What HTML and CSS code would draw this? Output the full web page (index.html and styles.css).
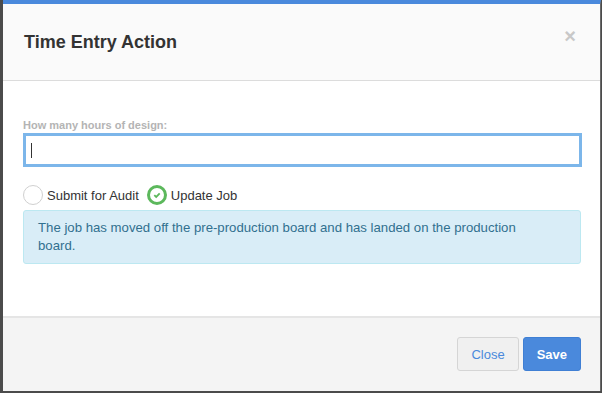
FILE: index.html
```html
<!DOCTYPE html>
<html lang="en">
<head>
  <meta charset="UTF-8">
  <title>Time Entry Action</title>
  <link rel="stylesheet" href="styles.css">
</head>
<body>

  <div class="modal">
    <div class="modal-header">
      <h4 class="modal-title">Time Entry Action</h4>
      <span class="close">&times;</span>
    </div>

    <div class="modal-body">
      <label class="field-label" for="hours">How many hours of design:</label>
      <div class="input-wrap">
        <input type="text" id="hours" class="field-input">
        <span class="caret"></span>
      </div>

      <div class="radio-row">
        <span class="radio"></span>
        <span class="radio-text">Submit for Audit</span>
        <span class="radio checked">
          <svg width="10" height="10" viewBox="0 0 10 10"><path d="M2.3 5.1 L4.2 6.9 L7.7 3.3" fill="none" stroke="#5cb85c" stroke-width="1.8"/></svg>
        </span>
        <span class="radio-text">Update Job</span>
      </div>

      <div class="alert">
        The job has moved off the pre-production board and has landed on the production board.
      </div>
    </div>

    <div class="modal-footer">
      <button class="btn btn-default">Close</button>
      <button class="btn btn-primary">Save</button>
    </div>
  </div>

</body>
</html>
```

FILE: styles.css
```css
html, body {
  margin: 0;
  height: 100%;
}

body {
  background: #4b4b4b;
  font-family: "Liberation Sans", Arial, sans-serif;
  font-size: 13px;
  color: #333;
  padding: 0 1px 2px 3px;
  box-sizing: border-box;
  display: flex;
}

.modal {
  flex: 1;
  display: flex;
  flex-direction: column;
  background: #fff;
  border-top: 4px solid #4a89dc;
  border-right: 1px solid #6a6a6a;
}

.modal-header {
  height: 76px;
  background: #fafafa;
  border-bottom: 1px solid #dcdcdc;
  display: flex;
  align-items: center;
  justify-content: space-between;
  padding: 0 24px 0 21px;
}

.modal-title {
  margin: 0;
  font-size: 18px;
  font-weight: bold;
  color: #333;
}

.close {
  font-size: 20px;
  font-weight: bold;
  color: #c8c8c8;
  line-height: 1;
  margin-top: -12px;
}

.modal-body {
  height: 235px;
  padding: 38px 18px 0 20px;
  box-sizing: border-box;
}

.field-label {
  display: block;
  font-size: 11px;
  font-weight: bold;
  color: #b4b4b4;
  margin-bottom: 2px;
}

.input-wrap {
  position: relative;
}

.field-input {
  display: block;
  width: 100%;
  box-sizing: border-box;
  height: 34px;
  border: 3px solid #7cb6ea;
  outline: none;
  font-size: 13px;
  padding: 0 6px;
}

/* text cursor in the focused field */
.caret {
  position: absolute;
  left: 8px;
  top: 10px;
  width: 1px;
  height: 15px;
  background: #333;
}

.radio-row {
  display: flex;
  align-items: center;
  margin-top: 18px;
  height: 20px;
}

.radio {
  width: 18px;
  height: 18px;
  border: 1px solid #d0d0d0;
  border-radius: 50%;
  display: flex;
  align-items: center;
  justify-content: center;
  background: #fff;
}

.radio.checked {
  width: 14px;
  height: 14px;
  border: 3px solid #5cb85c;
  margin-left: 8px;
}

.radio-text {
  margin-left: 4px;
}

.alert {
  margin-top: 5px;
  margin-right: 1px;
  background: #d9edf7;
  border: 1px solid #bce8f1;
  border-radius: 3px;
  color: #31708f;
  padding: 8px 35px 8px 14px;
  line-height: 18px;
  font-size: 13.2px;
}

.modal-footer {
  flex: 1;
  background: #f4f4f4;
  border-top: 2px solid #e5e5e5;
  display: flex;
  justify-content: flex-end;
  align-items: flex-start;
  padding: 19px 19px 0 0;
  gap: 4px;
}

.btn {
  font-family: "Liberation Sans", Arial, sans-serif;
  font-size: 13px;
  height: 34px;
  border-radius: 3px;
  padding: 0 13px;
  cursor: pointer;
}

.btn-default {
  background: #f0f0f0;
  border: 1px solid #d5d5d5;
  color: #4a89dc;
}

.btn-primary {
  background: #4a89dc;
  border: 1px solid #3f7fd4;
  color: #fff;
  font-weight: bold;
}
```
